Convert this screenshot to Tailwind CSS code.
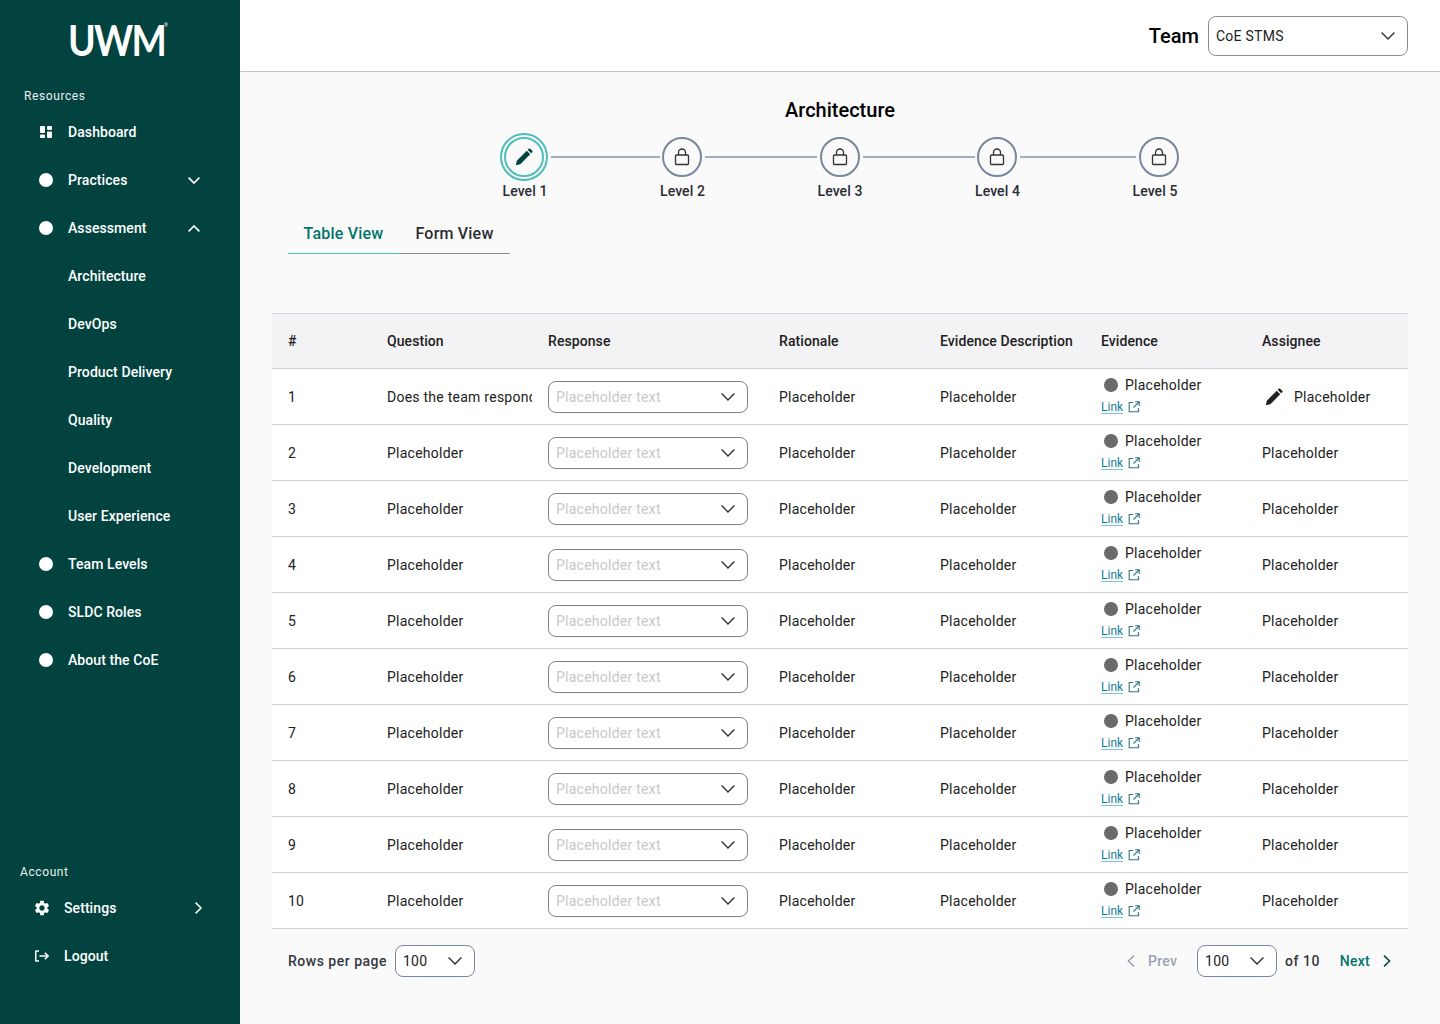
<!DOCTYPE html>
<html lang="en">
    <head>
        <meta charset="UTF-8" />
        <meta name="viewport" content="width=device-width, initial-scale=1.0" />
        <title>Architecture Assessment</title>
        <script src="https://cdn.jsdelivr.net/npm/@tailwindcss/browser@4"></script>
    </head>
    <body class="font-['Roboto',sans-serif] bg-[#fafafa] text-[#212121]">
        <div class="flex h-[1024px] w-[1440px] overflow-hidden">
            <!-- sidebar -->
            <aside class="w-[240px] shrink-0 bg-[#02433f] text-white flex flex-col justify-between pb-[44px] text-sm font-medium tracking-[0.08px]">
                <div>
                    <div class="h-[84px] flex justify-center items-start pt-[13px] pr-[16px]">
                        <span class="font-['Lato',sans-serif] font-bold text-[42px] leading-[54px] tracking-[-2px] text-white scale-x-[0.89] origin-right">UWM</span><span class="text-[5px] leading-[5px] mt-[10px] ml-[-1px] font-normal">®</span>
                    </div>
                    <p class="pl-6 text-xs leading-6 tracking-[0.6px] font-normal h-6 text-[#e6f0ef]">Resources</p>
                    <nav>
                        <a class="h-12 flex items-center pl-[40px]">
                            <svg class="w-[12px] h-[12px] mr-[16px]" viewBox="0 0 12 12" fill="#fff"><rect x="0" y="0" width="5" height="7" rx="1"/><rect x="7" y="0" width="5" height="4" rx="1"/><rect x="7" y="5.5" width="5" height="6.5" rx="1"/><rect x="0" y="8.5" width="5" height="3.5" rx="1"/></svg>
                            Dashboard
                        </a>
                        <a class="h-12 flex items-center pl-[39px]">
                            <span class="w-[14px] h-[14px] mr-[15px] rounded-full bg-white"></span>
                            <span class="w-[120px]">Practices</span>
                            <svg class="w-[12px] h-[7px]" viewBox="0 0 12 7" fill="none" stroke="#fff" stroke-width="1.7"><path d="M0.6 0.6 6 6 11.4 0.6"/></svg>
                        </a>
                        <a class="h-12 flex items-center pl-[39px]">
                            <span class="w-[14px] h-[14px] mr-[15px] rounded-full bg-white"></span>
                            <span class="w-[120px]">Assessment</span>
                            <svg class="w-[12px] h-[7px]" viewBox="0 0 12 7" fill="none" stroke="#fff" stroke-width="1.7"><path d="M0.6 6.4 6 1 11.4 6.4"/></svg>
                        </a>
                        <a class="h-12 flex items-center pl-[68px]">Architecture</a>
                        <a class="h-12 flex items-center pl-[68px]">DevOps</a>
                        <a class="h-12 flex items-center pl-[68px]">Product Delivery</a>
                        <a class="h-12 flex items-center pl-[68px]">Quality</a>
                        <a class="h-12 flex items-center pl-[68px]">Development</a>
                        <a class="h-12 flex items-center pl-[68px]">User Experience</a>
                        <a class="h-12 flex items-center pl-[39px]">
                            <span class="w-[14px] h-[14px] mr-[15px] rounded-full bg-white"></span>
                            Team Levels
                        </a>
                        <a class="h-12 flex items-center pl-[39px]">
                            <span class="w-[14px] h-[14px] mr-[15px] rounded-full bg-white"></span>
                            SLDC Roles
                        </a>
                        <a class="h-12 flex items-center pl-[39px]">
                            <span class="w-[14px] h-[14px] mr-[15px] rounded-full bg-white"></span>
                            About the CoE
                        </a>
                    </nav>
                </div>
                <div>
                    <p class="pl-5 text-xs leading-6 tracking-[0.6px] font-normal h-6 text-[#e6f0ef]">Account</p>
                    <a class="h-12 flex items-center pl-[33px]">
                        <svg class="w-[18px] h-[18px] mr-[13px]" viewBox="0 0 24 24" fill="#fff"><path d="M19.14 12.94c.04-.3.06-.61.06-.94 0-.32-.02-.64-.07-.94l2.03-1.58a.49.49 0 0 0 .12-.61l-1.92-3.32a.488.488 0 0 0-.59-.22l-2.39.96c-.5-.38-1.03-.7-1.62-.94l-.36-2.54a.484.484 0 0 0-.48-.41h-3.84c-.24 0-.43.17-.47.41l-.36 2.54c-.59.24-1.13.57-1.62.94l-2.39-.96c-.22-.08-.47 0-.59.22L2.74 8.87c-.12.21-.08.47.12.61l2.03 1.58c-.05.3-.09.63-.09.94s.02.64.07.94l-2.03 1.58a.49.49 0 0 0-.12.61l1.92 3.32c.12.22.37.29.59.22l2.39-.96c.5.38 1.03.7 1.62.94l.36 2.54c.05.24.24.41.48.41h3.84c.24 0 .44-.17.47-.41l.36-2.54c.59-.24 1.13-.56 1.62-.94l2.39.96c.22.08.47 0 .59-.22l1.92-3.32c.12-.22.07-.47-.12-.61l-2.01-1.58zM12 15.6c-1.98 0-3.6-1.62-3.6-3.6s1.62-3.6 3.6-3.6 3.6 1.62 3.6 3.6-1.62 3.6-3.6 3.6z"/></svg>
                        <span class="w-[131px]">Settings</span>
                        <svg class="w-[7px] h-[12px]" viewBox="0 0 7 12" fill="none" stroke="#fff" stroke-width="1.5"><path d="M0.6 0.6 6 6 0.6 11.4"/></svg>
                    </a>
                    <a class="h-12 flex items-center pl-[35px]">
                        <svg class="w-[14px] h-[12px] mr-[15px]" viewBox="0 0 14 12" fill="none" stroke="#fff" stroke-width="1.6"><path d="M4 1H1.5a.8.8 0 0 0-.8.8v8.4a.8.8 0 0 0 .8.8H4"/><path d="M4.5 6H13M9.8 2.8 13 6 9.8 9.2"/></svg>
                        Logout
                    </a>
                </div>
            </aside>

            <div class="flex-1 flex flex-col">
                <!-- top bar -->
                <header class="h-[72px] bg-white border-b border-[#c4c4c4] flex items-center justify-end pr-8 shrink-0">
                    <span class="text-xl font-medium text-black mr-[9px]">Team</span>
                    <div class="w-[200px] h-10 border border-[#8c8c8c] rounded-lg flex items-center justify-between pl-[7px] pr-[12px] bg-white text-sm tracking-[0.25px]">
                        CoE STMS
                        <svg class="w-[14px] h-[8px]" viewBox="0 0 14 8" fill="none" stroke="#333" stroke-width="1.4"><path d="M0.6 0.6 7 7 13.4 0.6"/></svg>
                    </div>
                </header>

                <main class="px-8 flex-1">
                    <h1 class="text-xl leading-7 font-medium text-black text-center mt-[24px]">Architecture</h1>

                    <!-- levels -->
                    <div class="flex items-center pl-[228px] mt-[9px] h-12">
                        <div class="w-12 h-12 rounded-full border-2 border-[#4fbdba] p-[2px] shrink-0">
                            <div class="w-full h-full rounded-full border-2 border-[#4fbdba] flex items-center justify-center">
                                <svg class="w-[22px] h-[22px]" viewBox="0 0 24 24" fill="#02433f"><path d="M3 21l1.2-5L15 5.2 18.8 9 8 19.8z"/><path d="M16 4.2l1.3-1.3a1 1 0 0 1 1.4 0l2.4 2.4a1 1 0 0 1 0 1.4L19.8 8z"/></svg>
                            </div>
                        </div>
                        <div class="w-[109px] h-[2px] bg-[#a3adbf] ml-[3px] mr-[2px]"></div>
                        <div class="w-10 h-10 rounded-full border-2 border-[#7a869e] flex items-center justify-center shrink-0">
                            <svg class="w-[16px] h-[18px]" viewBox="0 0 16 18" fill="none" stroke="#333" stroke-width="1.3"><rect x="1.5" y="7" width="13" height="9.5" rx="1"/><path d="M4.5 7V4.5a3.5 3.5 0 0 1 7 0V7"/></svg>
                        </div>
                        <div class="w-[112px] h-[2px] bg-[#a3adbf] mx-[3px]"></div>
                        <div class="w-10 h-10 rounded-full border-2 border-[#7a869e] flex items-center justify-center shrink-0">
                            <svg class="w-[16px] h-[18px]" viewBox="0 0 16 18" fill="none" stroke="#333" stroke-width="1.3"><rect x="1.5" y="7" width="13" height="9.5" rx="1"/><path d="M4.5 7V4.5a3.5 3.5 0 0 1 7 0V7"/></svg>
                        </div>
                        <div class="w-[112px] h-[2px] bg-[#a3adbf] ml-[3px] mr-[2px]"></div>
                        <div class="w-10 h-10 rounded-full border-2 border-[#7a869e] flex items-center justify-center shrink-0">
                            <svg class="w-[16px] h-[18px]" viewBox="0 0 16 18" fill="none" stroke="#333" stroke-width="1.3"><rect x="1.5" y="7" width="13" height="9.5" rx="1"/><path d="M4.5 7V4.5a3.5 3.5 0 0 1 7 0V7"/></svg>
                        </div>
                        <div class="w-[116px] h-[2px] bg-[#a3adbf] ml-[3px] mr-[3px]"></div>
                        <div class="w-10 h-10 rounded-full border-2 border-[#7a869e] flex items-center justify-center shrink-0">
                            <svg class="w-[16px] h-[18px]" viewBox="0 0 16 18" fill="none" stroke="#333" stroke-width="1.3"><rect x="1.5" y="7" width="13" height="9.5" rx="1"/><path d="M4.5 7V4.5a3.5 3.5 0 0 1 7 0V7"/></svg>
                        </div>
                    </div>
                    <div class="flex justify-center text-sm leading-5 font-medium tracking-[0.1px] text-[#2b2b33]">
                        <span class="w-[157.5px] text-center">Level 1</span>
                        <span class="w-[157.5px] text-center">Level 2</span>
                        <span class="w-[157.5px] text-center">Level 3</span>
                        <span class="w-[157.5px] text-center">Level 4</span>
                        <span class="w-[157.5px] text-center">Level 5</span>
                    </div>

                    <!-- tabs -->
                    <div class="flex ml-4 mt-[13px] text-base tracking-[0.2px] font-medium">
                        <a class="w-[111px] h-[40px] flex items-center justify-center text-[#00756b] border-b border-[#4fbdba]">Table View</a>
                        <a class="w-[111px] h-[40px] flex items-center justify-center text-[#2b2b33] border-b border-[#8a8a8a]">Form View</a>
                    </div>

                    <!-- table -->
                    <div class="mt-[59px] text-sm tracking-[0.25px]">
                        <div class="grid grid-cols-[99px_161px_231px_161px_161px_161px_162px] h-[56px] items-center bg-[#f3f3f5] border-y border-[#cdd3dc] font-medium tracking-[0.08px] text-[#212121]">
                            <div class="pl-4">#</div>
                            <div class="pl-4">Question</div>
                            <div class="pl-4">Response</div>
                            <div class="pl-4">Rationale</div>
                            <div class="pl-4">Evidence Description</div>
                            <div class="pl-4">Evidence</div>
                            <div class="pl-4">Assignee</div>
                        </div>
                        <div id="rows"></div>
                    </div>

                    <!-- pagination -->
                    <div class="flex items-center justify-between h-[64px] pl-4 pr-[17px] text-sm tracking-[0.25px] font-medium">
                        <div class="flex items-center">
                            <span class="text-[#33383f] tracking-[0.5px] mr-2">Rows per page</span>
                            <div class="w-20 h-8 border border-[#7a869e] rounded-lg bg-white flex items-center justify-between pl-[7px] pr-[12px] font-normal">
                                100
                                <svg class="w-[14px] h-[8px]" viewBox="0 0 14 8" fill="none" stroke="#333" stroke-width="1.4"><path d="M0.6 0.6 7 7 13.4 0.6"/></svg>
                            </div>
                        </div>
                        <div class="flex items-center">
                            <svg class="w-[8px] h-[12px] mr-[13px]" viewBox="0 0 8 12" fill="none" stroke="#9aa3b2" stroke-width="1.5"><path d="M7 0.6 1.4 6 7 11.4"/></svg>
                            <span class="text-[#9aa3b2] mr-5">Prev</span>
                            <div class="w-20 h-8 border border-[#7a869e] rounded-lg bg-white flex items-center justify-between pl-[7px] pr-[12px] font-normal mr-2">
                                100
                                <svg class="w-[14px] h-[8px]" viewBox="0 0 14 8" fill="none" stroke="#333" stroke-width="1.4"><path d="M0.6 0.6 7 7 13.4 0.6"/></svg>
                            </div>
                            <span class="text-[#33383f] tracking-[0.5px] mr-5">of 10</span>
                            <span class="text-[#00756b] mr-[13px]">Next</span>
                            <svg class="w-[8px] h-[12px]" viewBox="0 0 8 12" fill="none" stroke="#02433f" stroke-width="1.5"><path d="M1 0.6 6.6 6 1 11.4"/></svg>
                        </div>
                    </div>
                </main>
            </div>
        </div>

        <script>
            const rowsEl = document.getElementById('rows');
            let html = '';
            for (let i = 1; i <= 10; i++) {
                const question = i === 1 ? 'Does the team respond to incidents' : 'Placeholder';
                const assignee =
                    i === 1
                        ? `<div class="pl-[17px] flex items-center"><svg class="w-[22px] h-[22px] mr-[9px]" viewBox="0 0 24 24" fill="#212121"><path d="M3 21l1.2-5L15 5.2 18.8 9 8 19.8z"/><path d="M16 4.2l1.3-1.3a1 1 0 0 1 1.4 0l2.4 2.4a1 1 0 0 1 0 1.4L19.8 8z"/></svg>Placeholder</div>`
                        : `<div class="pl-4">Placeholder</div>`;
                html += `
                <div class="grid grid-cols-[99px_161px_231px_161px_161px_161px_162px] h-[56px] items-center bg-white border-b border-[#cdd3dc]">
                    <div class="pl-4">${i}</div>
                    <div class="pl-4 overflow-hidden whitespace-nowrap">${question}</div>
                    <div class="pl-4">
                        <div class="w-[200px] h-8 border border-[#808080] rounded-lg flex items-center justify-between pl-[7px] pr-[12px] bg-white text-[#c8c8c8]">
                            Placeholder text
                            <svg class="w-[14px] h-[8px]" viewBox="0 0 14 8" fill="none" stroke="#333" stroke-width="1.4"><path d="M0.6 0.6 7 7 13.4 0.6"/></svg>
                        </div>
                    </div>
                    <div class="pl-4">Placeholder</div>
                    <div class="pl-4">Placeholder</div>
                    <div class="pl-4 pb-[2px]">
                        <div class="flex items-center pl-[3px] h-5"><span class="w-[14px] h-[14px] rounded-full bg-[#6b6b6b] mr-[7px]"></span>Placeholder</div>
                        <div class="flex items-center h-5 mt-[2px] text-xs tracking-normal">
                            <span class="text-[#0f7c99] underline decoration-[#7cc4d6] underline-offset-2">Link</span>
                            <svg class="w-3 h-3 ml-[5px]" viewBox="0 0 12 12" fill="none" stroke="#2f7480" stroke-width="1.1"><path d="M5 1.5H1.2v9.3h9.3V7"/><path d="M7 .8h4.2V5M11 1 5.5 6.5"/></svg>
                        </div>
                    </div>
                    ${assignee}
                </div>`;
            }
            rowsEl.innerHTML = html;
        </script>
    </body>
</html>
